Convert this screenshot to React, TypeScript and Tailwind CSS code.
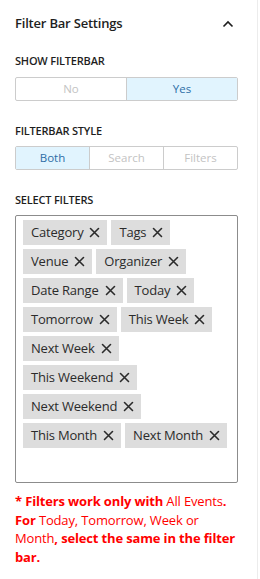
import React from "react";

const tags = [
  "Category",
  "Tags",
  "Venue",
  "Organizer",
  "Date Range",
  "Today",
  "Tomorrow",
  "This Week",
  "Next Week",
  "This Weekend",
  "Next Weekend",
  "This Month",
  "Next Month",
];

function XIcon() {
  return (
    <svg width="11" height="11" viewBox="0 0 11 11" className="shrink-0">
      <path d="M1.5 1.5 L9.5 9.5 M9.5 1.5 L1.5 9.5" stroke="#2b2b2b" strokeWidth="1.6" strokeLinecap="round" />
    </svg>
  );
}

export default function App() {
  return (
    <div
      className="w-[260px] h-[579px] bg-white"
      style={{ fontFamily: '"Open Sans", "Noto Sans", sans-serif' }}
    >
      <div className="w-[258px] h-full border-r border-[#ececec] pl-[15px] pr-[19px]">
        <div className="flex items-center justify-between h-[46px] pt-[1px]">
          <span className="text-[13px] font-semibold text-[#1e1e1e] tracking-[-0.2px]">Filter Bar Settings</span>
          <svg width="12" height="8" viewBox="0 0 12 8" className="mr-[4px]">
            <path d="M1.5 6.5 L6 2 L10.5 6.5" stroke="#1e1e1e" strokeWidth="1.6" fill="none" />
          </svg>
        </div>
        <div className="mt-[8px] text-[11px] font-semibold text-[#1e1e1e] uppercase leading-[14px] tracking-[-0.2px]">Show Filterbar</div>
        <div className="mt-[9px] flex h-[24px] border border-[#cccccc] rounded-[2px] text-[11.5px]">
          <div className="flex-1 flex items-center justify-center text-[#c3c3c3]">No</div>
          <div className="flex-1 flex items-center justify-center bg-[#e1f4fe] border-l border-[#cccccc] text-[#2e6ea6]">Yes</div>
        </div>
        <div className="mt-[23px] text-[11px] font-semibold text-[#1e1e1e] uppercase leading-[14px] tracking-[-0.2px]">Filterbar Style</div>
        <div className="mt-[8px] flex h-[24px] border border-[#cccccc] rounded-[2px] text-[11.5px]">
          <div className="flex-1 flex items-center justify-center bg-[#e1f4fe] text-[#2e6ea6]">Both</div>
          <div className="flex-1 flex items-center justify-center border-l border-[#cccccc] text-[#c3c3c3]">Search</div>
          <div className="flex-1 flex items-center justify-center border-l border-[#cccccc] text-[#c3c3c3]">Filters</div>
        </div>
        <div className="mt-[23px] text-[11px] font-semibold text-[#1e1e1e] uppercase leading-[14px] tracking-[-0.2px]">Select Filters</div>
        <div className="mt-[8px] h-[268px] border border-[#8c8c8c] rounded-[2px] pl-[7px] pr-[9px] pt-[4px]">
          <div className="flex flex-wrap gap-[4px]">
            {tags.map((t) => (
              <div
                key={t}
                className="h-[25px] flex items-center gap-[6px] bg-[#dddddd] pl-[8px] pr-[7px] text-[13px] tracking-[-0.2px] text-[#2b2b2b]"
              >
                <span>{t}</span>
                <XIcon />
              </div>
            ))}
          </div>
        </div>
        <p className="mt-[9px] text-[13px] leading-[18.5px] tracking-[-0.15px] text-[#ff0000] font-bold">
          * Filters work only with <span className="font-normal">All Events</span>. For{" "}
          <span className="font-normal">Today, Tomorrow, Week or Month</span>, select the same in the filter bar.
        </p>
      </div>
    </div>
  );
}
